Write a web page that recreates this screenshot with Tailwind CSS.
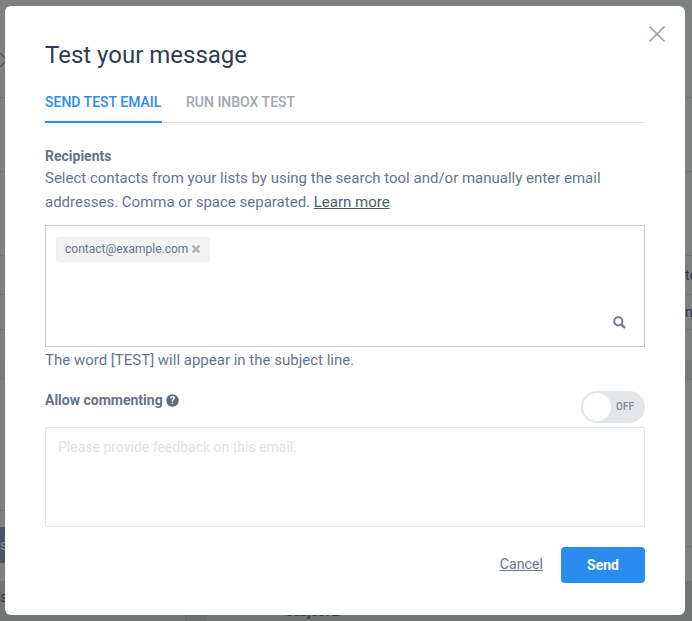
<!DOCTYPE html>
<html><head><meta charset="utf-8"><script src="https://cdn.jsdelivr.net/npm/@tailwindcss/browser@4"></script></head>
<body class="m-0 overflow-hidden">
<div class="relative w-[692px] h-[621px] overflow-hidden bg-[#7f8080] font-['Roboto',sans-serif]">
  <div class="flex flex-col h-full">
    <div class="h-[98px] shrink-0 border-b border-[#737474]"></div>
    <div class="h-[74px] shrink-0 border-b border-[#737474]"></div>
    <div class="h-[84px] shrink-0 border-b border-[#737474]"></div>
    <div class="h-[39px] shrink-0 border-b border-[#737474] flex justify-end items-center text-[#2c3a48] text-[14px]"><span class="w-[7px] overflow-hidden">to</span></div>
    <div class="h-[35px] shrink-0 border-b border-[#737474] flex justify-end items-center text-[#2c3a48] text-[14px]"><span class="w-[7px] overflow-hidden">ng</span></div>
    <div class="h-[31px] shrink-0 border-b border-[#787979]"></div>
    <div class="h-[19px] shrink-0 bg-[#797a7a] border-b border-[#737474]"></div>
    <div class="h-[167px] shrink-0 border-b border-[#737474]"></div>
    <div class="h-[35px] shrink-0 border-b border-[#6f7171]"></div>
    <div class="grow bg-[#737575] pl-[285px] text-[13px] font-medium text-[#2c3a48] leading-[16px] pt-[22px]">Subject 2</div>
  </div>
  <div class="absolute left-0 top-[510px] w-[5px] h-[1px] bg-[#737474]"></div>
  <div class="absolute left-0 top-[527px] w-[5px] h-[36px] bg-[#4c5560] text-[#8a9099] text-[14px] leading-[36px] overflow-hidden">s</div>
  <div class="absolute left-0 top-[580px] w-[5px] h-[35px] text-[#2c3a48] text-[14px] leading-[34px] overflow-hidden">s</div>
  <div class="absolute left-[185px] top-[615px] w-[21px] h-[6px] bg-[#6e7070] border-x border-[#676969]"></div>
  <svg class="absolute left-0 top-[52px]" width="5" height="16" viewBox="0 0 5 16"><path d="M0 1 L7 8 L0 15" fill="none" stroke="#4a5560" stroke-width="1.3"/></svg>

  <div class="absolute left-[5px] top-[6px] w-[680px] h-[609px] bg-white rounded-[6px] px-[40px]">
    <button class="absolute right-[20px] top-[20px] w-[16px] h-[16px] p-0">
      <svg width="16" height="16" viewBox="0 0 16 16" class="block"><path d="M0.5 0.5 L15.5 15.5 M15.5 0.5 L0.5 15.5" stroke="#9aa5b1" stroke-width="1.6" fill="none"/></svg>
    </button>
    <h2 class="m-0 pt-[34px] text-[24px] leading-[30px] font-normal text-[#2d3e50]">Test your message</h2>
    <div class="flex gap-[24px] mt-[17px] border-b border-[#e0e2e4] h-[36px] text-[14px] font-medium leading-[30px]">
      <div class="h-[36px] border-b-2 border-[#2b8cf0] text-[#2b8cf0] w-[117px]">SEND TEST EMAIL</div>
      <div class="text-[#a0a8b2]">RUN INBOX TEST</div>
    </div>
    <div class="mt-[23px] text-[14px] leading-[24px] text-[#66768a]">
      <div class="font-bold leading-[20px] text-[#667385]">Recipients</div>
      <p class="m-0 text-[15px]">Select contacts from your lists by using the search tool and/or manually enter email<br>addresses. Comma or space separated. <a class="underline text-[#4e5b69]">Learn more</a></p>
    </div>
    <div class="relative mt-[11px] h-[122px] border border-[#c6cbce] pl-[10px] pt-[10px]">
      <div class="inline-flex items-center gap-[3px] h-[25px] pl-[8px] pr-[8px] bg-[#f3f3f3] border border-[#efefef] rounded-[3px] text-[12px] text-[#66768a]">
        <span>contact@example.com</span>
        <svg width="10" height="10" viewBox="0 0 10 10"><path d="M1.6 1.6 L8.4 8.4 M8.4 1.6 L1.6 8.4" stroke="#b0b5ba" stroke-width="2.7"/></svg>
      </div>
      <svg class="absolute right-[18px] bottom-[17px]" width="13" height="13" viewBox="0 0 13 13"><circle cx="5.3" cy="5.3" r="4.1" fill="none" stroke="#6f7b88" stroke-width="2"/><path d="M8.3 8.3 L12 12" stroke="#6f7b88" stroke-width="2.4"/></svg>
    </div>
    <p class="m-0 text-[15px] leading-[24px] mt-[1px] text-[#66768a]">The word [TEST] will appear in the subject line.</p>
    <div class="flex justify-between mt-[19px] h-[36px]">
      <div class="flex items-start gap-[4px] text-[14px] font-bold leading-[18px] text-[#667385]">Allow commenting
        <svg class="mt-[3px] -ml-[1px]" width="13" height="13" viewBox="0 0 13 13"><circle cx="6.5" cy="6.5" r="6.2" fill="#5f6b7a"/><text x="6.5" y="10" text-anchor="middle" fill="#fff" font-size="10" font-weight="700" font-family="Roboto">?</text></svg>
      </div>
      <div class="relative w-[64px] h-[32px] rounded-full bg-[#e2e6e9] text-[10px] font-medium text-[#7f8b97] leading-[32px] text-right pr-[11px]">OFF
        <div class="absolute left-[2px] top-[2px] w-[28px] h-[28px] rounded-full bg-white"></div>
      </div>
    </div>
    <div class="h-[100px] border border-[#e3e5e7] rounded-[2px] pl-[12px] pt-[9px] text-[14px] leading-[20px] text-[#e0e2e4]">Please provide feedback on this email.</div>
    <div class="flex justify-end items-center gap-[18px] mt-[20px]">
      <a class="underline text-[14.2px] text-[#66768a]">Cancel</a>
      <button class="w-[84px] h-[36px] bg-[#2b8cf0] rounded-[4px] text-white text-[14px] font-bold">Send</button>
    </div>
  </div>
</div>
</body></html>
